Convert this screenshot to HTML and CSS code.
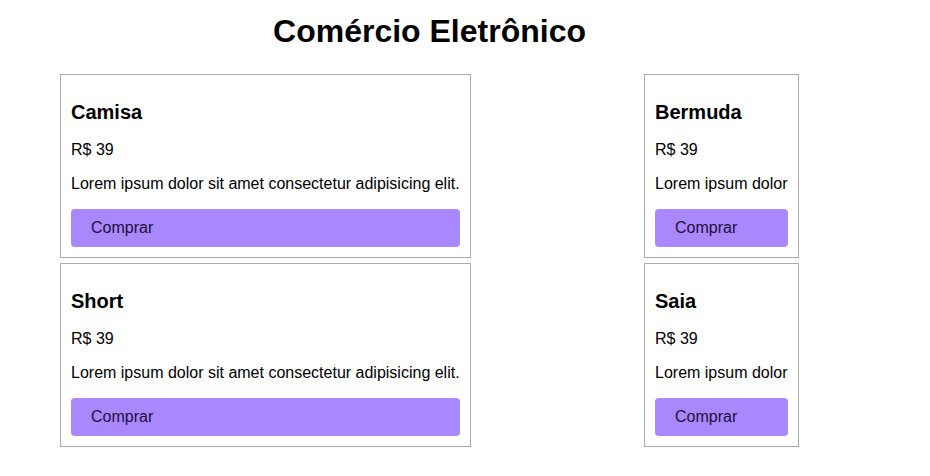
FILE: index.html
```html
<!DOCTYPE html>
<html lang="pt-BR">
<head>
<meta charset="utf-8">
<title>Comércio Eletrônico</title>
<link rel="stylesheet" href="styles.css">
</head>
<body>
<main class="wrapper">
  <h1 class="title">Comércio Eletrônico</h1>
  <section class="grid">
    <article class="card">
      <h2 class="card-name">Camisa</h2>
      <p class="card-price">R$ 39</p>
      <p class="card-desc">Lorem ipsum dolor sit amet consectetur adipisicing elit.</p>
      <button class="buy">Comprar</button>
    </article>
    <article class="card">
      <h2 class="card-name">Bermuda</h2>
      <p class="card-price">R$ 39</p>
      <p class="card-desc">Lorem ipsum dolor</p>
      <button class="buy">Comprar</button>
    </article>
    <article class="card">
      <h2 class="card-name">Short</h2>
      <p class="card-price">R$ 39</p>
      <p class="card-desc">Lorem ipsum dolor sit amet consectetur adipisicing elit.</p>
      <button class="buy">Comprar</button>
    </article>
    <article class="card">
      <h2 class="card-name">Saia</h2>
      <p class="card-price">R$ 39</p>
      <p class="card-desc">Lorem ipsum dolor</p>
      <button class="buy">Comprar</button>
    </article>
  </section>
</main>
</body>
</html>
```

FILE: styles.css
```css
html, body {
  margin: 0;
  padding: 0;
  background: #ffffff;
}

body {
  font-family: "Liberation Sans", Arial, sans-serif;
  color: #000000;
}

.wrapper {
  width: 739px;
  margin-left: 60px;
  padding-top: 13px;
}

.title {
  margin: 0 0 24px 0;
  font-size: 32px;
  font-weight: bold;
  text-align: center;
  line-height: 37px;
}

.grid {
  display: grid;
  grid-template-columns: 411px 155px;
  justify-content: space-between;
  row-gap: 5px;
}

.card {
  box-sizing: border-box;
  height: 184px;
  border: 1px solid #aaaaaa;
  padding: 10px;
  overflow: hidden;
}

.card-name {
  margin: 16px 0 17px 0;
  font-size: 20px;
  font-weight: bold;
  line-height: 23px;
}

.card-price,
.card-desc {
  margin: 0 0 16px 0;
  font-size: 16px;
  line-height: 18.4px;
  white-space: nowrap;
}

.card-desc {
  margin-bottom: 15px;
}

.buy {
  display: flex;
  align-items: center;
  box-sizing: border-box;
  width: 100%;
  height: 38px;
  padding: 0 20px;
  border: none;
  border-radius: 4px;
  background: #a987fd;
  color: #1c0f3f;
  font-family: "Liberation Sans", Arial, sans-serif;
  font-size: 16px;
  text-align: left;
}
```
